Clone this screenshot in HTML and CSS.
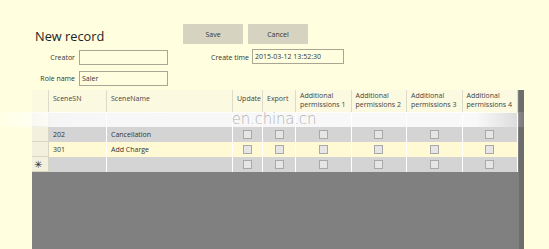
FILE: index.html
```html
<!DOCTYPE html>
<html>
<head>
<meta charset="utf-8">
<link rel="stylesheet" href="styles.css">
</head>
<body>
<div class="page">
  <div class="head">
    <h1 class="title">New record</h1>
    <div class="buttons">
      <button class="btn">Save</button>
      <button class="btn">Cancel</button>
    </div>
  </div>
  <div class="field-row first">
    <label class="lbl lbl-left">Creator</label>
    <div class="input w89"></div>
    <label class="lbl lbl-mid">Create time</label>
    <div class="input w92">2015-03-12 13:52:30</div>
  </div>
  <div class="field-row second">
    <label class="lbl lbl-left">Role name</label>
    <div class="input w89">Saler</div>
  </div>
  <div class="grid-frame">
    <div class="grid">
      <div class="row header">
        <div class="cell sel"></div>
        <div class="cell c-sn">SceneSN</div>
        <div class="cell c-name">SceneName</div>
        <div class="cell c-up">Update</div>
        <div class="cell c-ex">Export</div>
        <div class="cell c-p">Additional permissions 1</div>
        <div class="cell c-p">Additional permissions 2</div>
        <div class="cell c-p">Additional permissions 3</div>
        <div class="cell c-p">Additional permissions 4</div>
      </div>
      <div class="row data washed">
        <div class="cell sel"></div>
        <div class="cell c-sn"></div>
        <div class="cell c-name"></div>
        <div class="cell c-up"></div>
        <div class="cell c-ex"></div>
        <div class="cell c-p"></div>
        <div class="cell c-p"></div>
        <div class="cell c-p"></div>
        <div class="cell c-p"></div>
      </div>
      <div class="row data grey">
        <div class="cell sel"></div>
        <div class="cell c-sn">202</div>
        <div class="cell c-name">Cancellation</div>
        <div class="cell c-up"><span class="cb"></span></div>
        <div class="cell c-ex"><span class="cb"></span></div>
        <div class="cell c-p"><span class="cb"></span></div>
        <div class="cell c-p"><span class="cb"></span></div>
        <div class="cell c-p"><span class="cb"></span></div>
        <div class="cell c-p"><span class="cb"></span></div>
      </div>
      <div class="row data yellow">
        <div class="cell sel"></div>
        <div class="cell c-sn">301</div>
        <div class="cell c-name">Add Charge</div>
        <div class="cell c-up"><span class="cb"></span></div>
        <div class="cell c-ex"><span class="cb"></span></div>
        <div class="cell c-p"><span class="cb"></span></div>
        <div class="cell c-p"><span class="cb"></span></div>
        <div class="cell c-p"><span class="cb"></span></div>
        <div class="cell c-p"><span class="cb"></span></div>
      </div>
      <div class="row data grey">
        <div class="cell sel star">✳</div>
        <div class="cell c-sn"></div>
        <div class="cell c-name"></div>
        <div class="cell c-up"><span class="cb"></span></div>
        <div class="cell c-ex"><span class="cb"></span></div>
        <div class="cell c-p"><span class="cb"></span></div>
        <div class="cell c-p"><span class="cb"></span></div>
        <div class="cell c-p"><span class="cb"></span></div>
        <div class="cell c-p"><span class="cb"></span></div>
      </div>
    </div>
    <div class="scrollbar"></div>
  </div>
  <div class="watermark"><span>en.china.cn</span></div>
</div>
</body>
</html>
```

FILE: styles.css
```css
html, body {
  margin: 0;
  padding: 0;
  overflow: hidden;
}
body {
  background: #ffffe0;
  font-family: "Open Sans", "DejaVu Sans", sans-serif;
  color: #333;
  width: 549px;
  height: 249px;
}
.page {
  position: relative;
  padding-top: 24px;
  height: 225px;
}
.head {
  display: flex;
  align-items: flex-start;
  height: 20px;
}
.title {
  margin: 0 0 0 35px;
  width: 148px;
  font-size: 12.8px;
  font-weight: 400;
  color: #222;
  line-height: 20px;
  padding-top: 2px;
}
.buttons {
  display: flex;
  gap: 5px;
}
.btn {
  width: 60px;
  height: 20px;
  border: none;
  background: #d6d3c0;
  font-family: inherit;
  font-size: 7px;
  color: #333;
  padding: 0;
}
.field-row {
  display: flex;
  align-items: center;
  height: 15px;
}
.field-row.first { margin-top: 6px; }
.field-row.second { margin-top: 6px; }
.lbl {
  font-size: 7px;
  text-align: right;
  color: #333;
}
.lbl-left { width: 75px; margin-right: 4px; }
.lbl-mid { width: 81px; margin-right: 3px; }
.input {
  box-sizing: border-box;
  height: 15px;
  border: 1px solid #a9a793;
  background: #ffffe0;
  font-size: 7px;
  line-height: 13px;
  padding-left: 2px;
  color: #333;
}
.w89 { width: 89px; }
.w92 { width: 92px; height: 15px; margin-top: -2px; }
.grid-frame {
  margin: 4px 0 0 32px;
  width: 492px;
  height: 160px;
  display: flex;
  background: #808080;
}
.grid {
  width: 486px;
  display: flex;
  flex-direction: column;
}
.scrollbar {
  margin-left: 1px;
  width: 5px;
  background: #6d6d6d;
}
.row {
  display: flex;
}
.cell {
  box-sizing: border-box;
  font-size: 7px;
  padding-left: 4px;
  border-right: 1px solid #fff;
  overflow: hidden;
}
.sel { width: 17px; }
.c-sn { width: 58px; }
.c-name { width: 126px; }
.c-up { width: 30px; }
.c-ex { width: 33px; }
.c-p { width: 55.5px; }
.header {
  height: 23px;
  background: #fbf9df;
}
.header .cell {
  border-right: 1px solid #dcdac8;
  padding-top: 4px;
  line-height: 9px;
  color: #444;
}
.header .c-p { padding-top: 1px; }
.data {
  height: 15px;
  line-height: 15px;
}
.data .cell { color: #333; }
.data .c-up, .data .c-ex, .data .c-p {
  display: flex;
  align-items: center;
  justify-content: center;
  padding-left: 0;
}
.grey { background: #d4d4d4; }
.yellow { background: #fff9d4; }
.washed { height: 14px; background: #d4d4d4; }
.data .sel {
  background: #f3f1de;
  border-right: 1px solid #d8d6c4;
  border-bottom: 1px solid #d8d6c4;
}
.star {
  font-family: "DejaVu Sans", sans-serif;
  font-size: 10px;
  color: #222;
  padding-left: 2px;
  line-height: 15px;
}
.cb {
  display: block;
  width: 7px;
  height: 7px;
  border: 1px solid #a9a9a9;
  background: #e6e6e6;
}
.watermark {
  position: absolute;
  left: 0;
  top: 112px;
  width: 530px;
  height: 15px;
  background: linear-gradient(to right, rgba(255,255,255,0.2), rgba(255,255,255,0.8) 10%, rgba(255,255,255,0.85) 90%, rgba(255,255,255,0));
  display: flex;
  justify-content: center;
}
.watermark span {
  margin-left: 18px;
  font-family: "DejaVu Sans", sans-serif;
  font-weight: 200;
  font-size: 15px;
  line-height: 14px;
  color: #b4b4b4;
  letter-spacing: -0.2px;
}
```
